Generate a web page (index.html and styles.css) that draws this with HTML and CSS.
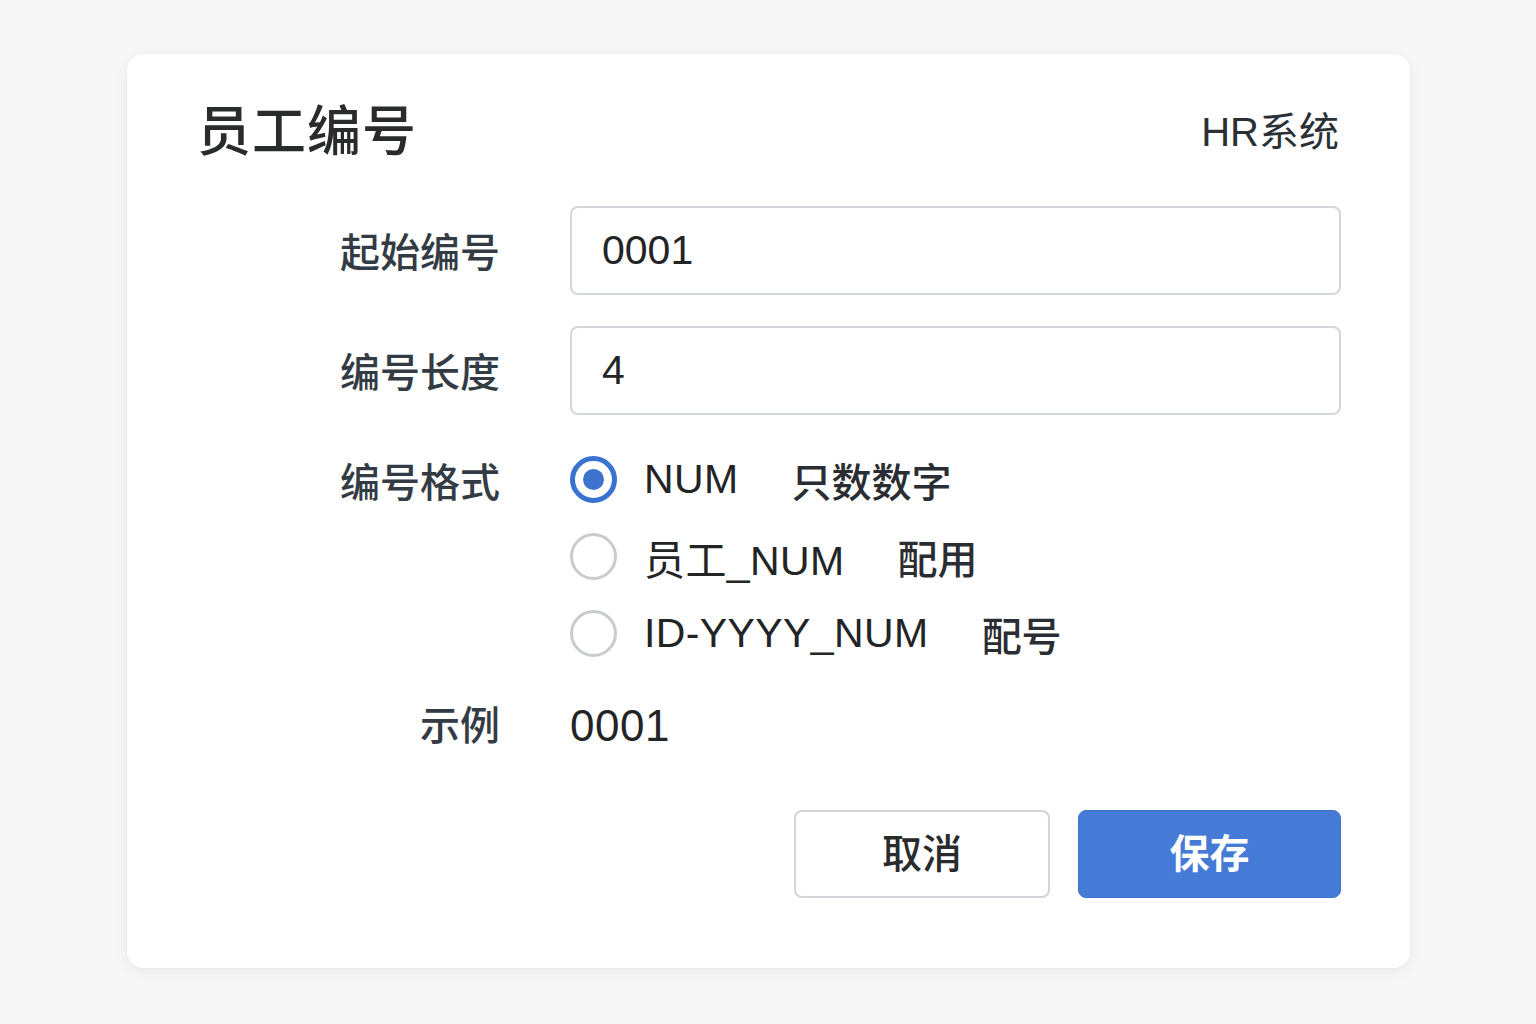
FILE: index.html
```html
<!DOCTYPE html>
<html lang="zh-CN">
<head>
<meta charset="utf-8">
<title>员工编号</title>
<link rel="stylesheet" href="styles.css">
</head>
<body>
<div class="card">
  <div class="header">
    <h1 class="title">员工编号</h1>
    <div class="brand">HR系统</div>
  </div>
  <div class="form">
    <div class="label label-input">起始编号</div>
    <div class="input">0001</div>
    <div class="label label-input">编号长度</div>
    <div class="input">4</div>
    <div class="label label-radio">编号格式</div>
    <div class="radios">
      <div class="radio-row">
        <span class="radio checked"></span>
        <span class="opt">NUM</span>
        <span class="desc">只数数字</span>
      </div>
      <div class="radio-row">
        <span class="radio"></span>
        <span class="opt">员工_NUM</span>
        <span class="desc">配用</span>
      </div>
      <div class="radio-row">
        <span class="radio"></span>
        <span class="opt">ID-YYYY_NUM</span>
        <span class="desc">配号</span>
      </div>
    </div>
    <div class="label label-example">示例</div>
    <div class="example">0001</div>
  </div>
  <div class="actions">
    <button class="btn btn-cancel">取消</button>
    <button class="btn btn-save">保存</button>
  </div>
</div>
</body>
</html>
```
FILE: styles.css
```css
* { box-sizing: border-box; }
html, body { margin: 0; padding: 0; }
body {
  background: #f7f7f7;
  font-family: "Liberation Sans", "Noto Sans CJK SC", sans-serif;
  padding: 54px 126px 56px 127px;
  height: 1024px;
}
.card {
  background: #ffffff;
  border-radius: 16px;
  box-shadow: 0 4px 14px rgba(0,0,0,0.06), 0 0 2px rgba(0,0,0,0.05);
  height: 914px;
  padding: 46px 69px 70px 70px;
  display: flex;
  flex-direction: column;
}
.header {
  display: flex;
  justify-content: space-between;
  align-items: center;
  height: 64px;
}
.title {
  margin: 0;
  font-size: 54px;
  font-weight: 500;
  color: #2a2b2d;
  line-height: 64px;
  letter-spacing: 1px;
}
.brand {
  font-size: 40px;
  color: #2b3037;
  margin-top: -6px;
  margin-right: 2px;
}
.form {
  margin-top: 42px;
  display: grid;
  grid-template-columns: 303px 1fr;
  column-gap: 70px;
  align-items: start;
}
.label {
  text-align: right;
  font-size: 40px;
  font-weight: 500;
  color: #333b45;
  line-height: 48px;
}
.label-input { padding-top: 23px; }
.input {
  height: 89px;
  border: 2px solid #d3d6da;
  border-radius: 8px;
  font-size: 41px;
  color: #222426;
  line-height: 85px;
  padding-left: 30px;
  margin-bottom: 31px;
}
.label-radio { padding-top: 13px; }
.radios {
  display: flex;
  flex-direction: column;
  margin-top: -5px;
}
.radio-row {
  display: flex;
  align-items: center;
  height: 77px;
  font-size: 41px;
  color: #222426;
}
.opt { letter-spacing: 0.4px; }
.radio {
  width: 47px;
  height: 47px;
  border-radius: 50%;
  border: 3px solid #c8cbcf;
  margin-right: 27px;
  flex: none;
  display: flex;
  align-items: center;
  justify-content: center;
}
.radio.checked {
  border: 5px solid #3a72d0;
}
.radio.checked::after {
  content: "";
  width: 21px;
  height: 21px;
  border-radius: 50%;
  background: #3d73cf;
}
.desc {
  margin-left: 53px;
  font-size: 40px;
  font-weight: 500;
  color: #2a2d31;
}
.label-example { margin-top: 30px; }
.example {
  margin-top: 30px;
  font-size: 44px;
  color: #222426;
  line-height: 48px;
  letter-spacing: 0.5px;
}
.actions {
  margin-top: auto;
  display: flex;
  justify-content: flex-end;
  gap: 28px;
}
.btn {
  height: 88px;
  border-radius: 8px;
  font-family: "Noto Sans CJK SC", sans-serif;
  font-size: 40px;
  line-height: 1;
  padding: 0 0 6px 0;
  cursor: pointer;
}
.btn-cancel {
  width: 256px;
  background: #ffffff;
  border: 2px solid #d1d4d8;
  color: #2a2b2d;
  font-weight: 500;
}
.btn-save {
  width: 263px;
  background: #457bd6;
  border: 1px solid #3d71cc;
  color: #ffffff;
  font-weight: 700;
}
```
